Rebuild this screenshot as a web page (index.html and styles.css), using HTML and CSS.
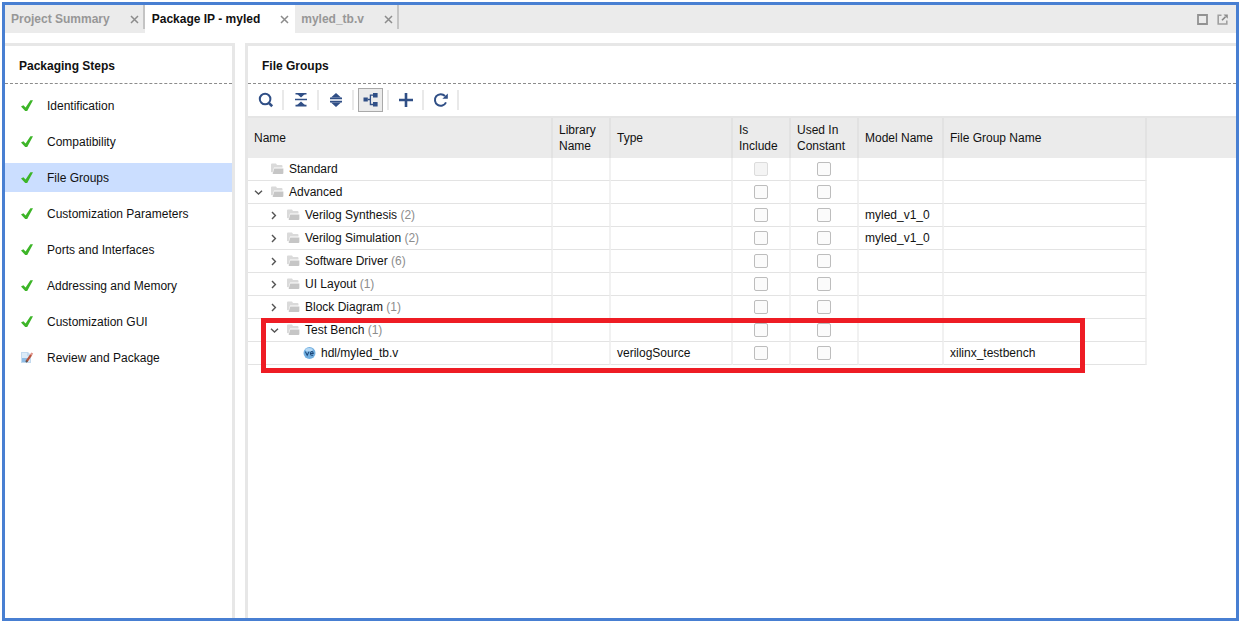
FILE: index.html
```html
<!DOCTYPE html>
<html lang="en">
<head>
<meta charset="utf-8">
<title>Package IP - myled</title>
<link rel="stylesheet" href="styles.css">
</head>
<body>
<svg class="defs" aria-hidden="true">
  <symbol id="close" viewBox="0 0 9 9"><path d="M1 1l7 7M8 1L1 8" stroke="#8c8c8c" stroke-width="1.5" fill="none"/></symbol>
  <symbol id="check" viewBox="0 0 14 14"><path d="M1 7.6L3.4 6.2L5.6 8.4L10.4 1.2H13L7.2 12H5.2z" fill="#3db528"/></symbol>
  <symbol id="folder" viewBox="0 0 13 12"><path d="M0 9V1.5Q0 0.5 1 0.5H5L6 2H10.5Q11.5 2 11.5 3V4.5H3L1.6 9.5z" fill="#dadada"/><path d="M3.2 5.6H12.4V10Q12.4 11 11.4 11H1.6z" fill="#c6c6c6"/></symbol>
  <symbol id="down" viewBox="0 0 9 9"><path d="M1 2.8L4.5 6L8 2.8" stroke="#555" stroke-width="1.4" fill="none"/></symbol>
  <symbol id="right" viewBox="0 0 9 9"><path d="M2 1L5.4 4.5L2 8" stroke="#555" stroke-width="1.4" fill="none"/></symbol>
</svg>
<div class="window">
  <header class="tabbar">
    <div class="tab"><span class="tab-label">Project Summary</span><button class="close" aria-label="Close Project Summary"><svg><use href="#close"/></svg></button></div>
    <div class="tab active"><span class="tab-label">Package IP - myled</span><button class="close" aria-label="Close Package IP"><svg><use href="#close"/></svg></button></div>
    <div class="tab"><span class="tab-label">myled_tb.v</span><button class="close" aria-label="Close myled_tb.v"><svg><use href="#close"/></svg></button></div>
    <div class="window-actions">
      <button aria-label="Maximize"><svg viewBox="0 0 11 11"><path d="M1 1H10V10H1z" fill="none" stroke="#929292" stroke-width="1.8"/></svg></button>
      <button aria-label="Float"><svg viewBox="0 0 11 11"><path d="M4.5 1.2H1.2V10H9.8V6.5" fill="none" stroke="#a0a0a0" stroke-width="1.6"/><path d="M5 6.2L8.5 2.7" stroke="#858585" stroke-width="1.6"/><path d="M6.5 0.5H10.8V4.8z" fill="#8c8c8c"/></svg></button>
    </div>
  </header>
  <main class="content">
    <nav class="steps">
      <h2 class="panel-title">Packaging Steps</h2>
      <ul class="step-list">
        <li><a href="#" class="step"><svg><use href="#check"/></svg>Identification</a></li>
        <li><a href="#" class="step"><svg><use href="#check"/></svg>Compatibility</a></li>
        <li><a href="#" class="step selected" aria-current="step"><svg><use href="#check"/></svg>File Groups</a></li>
        <li><a href="#" class="step"><svg><use href="#check"/></svg>Customization Parameters</a></li>
        <li><a href="#" class="step"><svg><use href="#check"/></svg>Ports and Interfaces</a></li>
        <li><a href="#" class="step"><svg><use href="#check"/></svg>Addressing and Memory</a></li>
        <li><a href="#" class="step"><svg><use href="#check"/></svg>Customization GUI</a></li>
        <li><a href="#" class="step"><svg viewBox="0 0 14 14"><path d="M1 1H8L11 4V12H1z" fill="#c3daef"/><path d="M2 2H7V5H10V11H2z" fill="#dcebf8"/><path d="M2 7H7.5V11H2z" fill="#8fbde6"/><path d="M6.5 10.5L11.3 3.6" stroke="#b5533c" stroke-width="2.2"/><path d="M10.8 4.2L12.3 2" stroke="#e0938a" stroke-width="2.2"/><path d="M6 11.3L7 9.8" stroke="#555" stroke-width="1.6"/></svg>Review and Package</a></li>
      </ul>
    </nav>
    <section class="groups">
      <h2 class="panel-title">File Groups</h2>
      <div class="toolbar">
        <button class="tool" aria-label="Search"><svg viewBox="0 0 16 16"><circle cx="7.1" cy="7" r="5.3" fill="none" stroke="#304f86" stroke-width="2"/><path d="M10.5 10.6L14.2 14.2" stroke="#304f86" stroke-width="2.6"/></svg></button><i class="sep"></i>
        <button class="tool" aria-label="Collapse all"><svg viewBox="0 0 16 16"><path d="M3 1H13L8 5.6zM8 9.4L13 14H3z" fill="#304f86"/><path d="M2 7.5H14M2.5 1.7H13.5M2.5 13.6H13.5" stroke="#304f86" stroke-width="1.6"/></svg></button><i class="sep"></i>
        <button class="tool" aria-label="Expand all"><svg viewBox="0 0 16 16"><path d="M8 1L13 5.4H3zM3 10.6H13L8 15z" fill="#304f86"/><path d="M2 6.4H14M2 9.6H14" stroke="#304f86" stroke-width="1.8"/></svg></button><i class="sep"></i>
        <button class="tool pressed" aria-label="Group by type" aria-pressed="true"><svg viewBox="0 0 16 16"><path d="M0.5 5.5H4.8V9.5H0.5zM10 1H14.6V5.4H10zM10 10H14.6V14.4H10z" fill="#304f86"/><path d="M4.8 7.5H7.4M10 3.2H7.4V12.5H10" fill="none" stroke="#304f86" stroke-width="1.3"/></svg></button><i class="sep"></i>
        <button class="tool" aria-label="Add"><svg viewBox="0 0 16 16"><path d="M8 1V15M1 8H15" stroke="#304f86" stroke-width="2.6"/></svg></button><i class="sep"></i>
        <button class="tool" aria-label="Refresh"><svg viewBox="0 0 16 16"><path d="M13 10.4A5.8 5.8 0 1 1 12 4" fill="none" stroke="#304f86" stroke-width="2"/><path d="M14.8 1.4V6.8H9.4z" fill="#304f86"/></svg></button><i class="sep"></i>
      </div>
      <div class="table-wrap">
        <table class="grid">
          <colgroup><col class="c-name"><col class="c-narrow"><col class="c-type"><col class="c-narrow"><col class="c-used"><col class="c-model"><col class="c-group"><col></colgroup>
          <thead><tr><th>Name</th><th>Library Name</th><th>Type</th><th>Is Include</th><th>Used In Constant</th><th>Model Name</th><th>File Group Name</th><th class="rest"></th></tr></thead>
          <tbody>
            <tr><td><div class="node"><span class="twist"></span><svg class="folder"><use href="#folder"/></svg>Standard</div></td><td></td><td></td><td class="tick"><input type="checkbox" disabled aria-label="Standard: is include"></td><td class="tick"><input type="checkbox" aria-label="Standard: used in constant"></td><td></td><td></td><td class="rest"></td></tr>
            <tr><td><div class="node"><svg class="twist"><use href="#down"/></svg><svg class="folder"><use href="#folder"/></svg>Advanced</div></td><td></td><td></td><td class="tick"><input type="checkbox" aria-label="Advanced: is include"></td><td class="tick"><input type="checkbox" aria-label="Advanced: used in constant"></td><td></td><td></td><td class="rest"></td></tr>
            <tr><td><div class="node level-1"><svg class="twist"><use href="#right"/></svg><svg class="folder"><use href="#folder"/></svg>Verilog Synthesis <span class="count">(2)</span></div></td><td></td><td></td><td class="tick"><input type="checkbox" aria-label="Verilog Synthesis: is include"></td><td class="tick"><input type="checkbox" aria-label="Verilog Synthesis: used in constant"></td><td>myled_v1_0</td><td></td><td class="rest"></td></tr>
            <tr><td><div class="node level-1"><svg class="twist"><use href="#right"/></svg><svg class="folder"><use href="#folder"/></svg>Verilog Simulation <span class="count">(2)</span></div></td><td></td><td></td><td class="tick"><input type="checkbox" aria-label="Verilog Simulation: is include"></td><td class="tick"><input type="checkbox" aria-label="Verilog Simulation: used in constant"></td><td>myled_v1_0</td><td></td><td class="rest"></td></tr>
            <tr><td><div class="node level-1"><svg class="twist"><use href="#right"/></svg><svg class="folder"><use href="#folder"/></svg>Software Driver <span class="count">(6)</span></div></td><td></td><td></td><td class="tick"><input type="checkbox" aria-label="Software Driver: is include"></td><td class="tick"><input type="checkbox" aria-label="Software Driver: used in constant"></td><td></td><td></td><td class="rest"></td></tr>
            <tr><td><div class="node level-1"><svg class="twist"><use href="#right"/></svg><svg class="folder"><use href="#folder"/></svg>UI Layout <span class="count">(1)</span></div></td><td></td><td></td><td class="tick"><input type="checkbox" aria-label="UI Layout: is include"></td><td class="tick"><input type="checkbox" aria-label="UI Layout: used in constant"></td><td></td><td></td><td class="rest"></td></tr>
            <tr><td><div class="node level-1"><svg class="twist"><use href="#right"/></svg><svg class="folder"><use href="#folder"/></svg>Block Diagram <span class="count">(1)</span></div></td><td></td><td></td><td class="tick"><input type="checkbox" aria-label="Block Diagram: is include"></td><td class="tick"><input type="checkbox" aria-label="Block Diagram: used in constant"></td><td></td><td></td><td class="rest"></td></tr>
            <tr><td><div class="node level-1"><svg class="twist"><use href="#down"/></svg><svg class="folder"><use href="#folder"/></svg>Test Bench <span class="count">(1)</span></div></td><td></td><td></td><td class="tick"><input type="checkbox" aria-label="Test Bench: is include"></td><td class="tick"><input type="checkbox" aria-label="Test Bench: used in constant"></td><td></td><td></td><td class="rest"></td></tr>
            <tr><td><div class="node level-2"><span class="twist"></span><svg class="folder" viewBox="0 0 13 13"><circle cx="6.5" cy="6.5" r="6.5" fill="#72afe0"/><ellipse cx="6" cy="3" rx="4" ry="2" fill="#b5d9f5"/><path d="M2 5L4 9L6 5M7.6 7H10.6Q10.4 4.8 9 4.8Q7.5 4.8 7.5 7Q7.5 9 9 9H10.5" fill="none" stroke="#1d4778" stroke-width="1.1"/></svg>hdl/myled_tb.v</div></td><td></td><td>verilogSource</td><td class="tick"><input type="checkbox" aria-label="myled_tb.v: is include"></td><td class="tick"><input type="checkbox" aria-label="myled_tb.v: used in constant"></td><td></td><td>xilinx_testbench</td><td class="rest"></td></tr>
          </tbody>
        </table>
        <div class="highlight"></div>
      </div>
    </section>
  </main>
</div>
</body>
</html>
```
FILE: styles.css
```css
* { box-sizing: border-box; }

body {
  margin: 0;
  padding: 2px 4px 3px 2px;
  height: 100vh;
  background: #fff;
  color: #111;
  font: 12px/16px "Liberation Sans", Arial, sans-serif;
}

button {
  padding: 0;
  border: 0;
  background: none;
  font: inherit;
}

svg { display: block; flex: none; }
.defs { position: absolute; width: 0; height: 0; }

.window {
  display: flex;
  flex-direction: column;
  height: 100%;
  border: 3px solid #487fd2;
}

/* Tabs */
.tabbar {
  display: flex;
  height: 28px;
  background: #ebebeb;
}
.tab {
  display: flex;
  align-items: center;
  gap: 20px;
  height: 24px;
  padding: 4px 4px 0 6px;
  border-right: 2px solid #c4c4c4;
  color: #979797;
  font-weight: bold;
}
.tab.active {
  height: 28px;
  padding: 0 6px 0 7px;
  border-right: 0;
  background: #fff;
  color: #111;
}
.close, .close svg { width: 9px; height: 9px; }
.window-actions {
  display: flex;
  align-items: center;
  gap: 9px;
  margin-left: auto;
  padding-right: 8px;
}
.window-actions svg { width: 11px; height: 11px; }

/* Panels */
.content {
  display: flex;
  flex: 1;
  gap: 10px;
  min-height: 0;
  padding-top: 10px;
}
.steps {
  flex: none;
  width: 230px;
  border: solid #e7e7e7;
  border-width: 3px 3px 0 0;
}
.groups {
  flex: 1;
  min-width: 0;
  border: solid #e7e7e7;
  border-width: 3px 0 0 3px;
}
.panel-title {
  margin: 0;
  height: 38px;
  padding-left: 14px;
  border-bottom: 1px dashed #8c8c8c;
  font-size: 12px;
  line-height: 40px;
}

.step-list {
  display: flex;
  flex-direction: column;
  gap: 7px;
  margin: 0;
  padding: 7px 0;
  list-style: none;
}
.step {
  display: flex;
  align-items: center;
  gap: 13px;
  height: 29px;
  padding-left: 15px;
  color: inherit;
  text-decoration: none;
}
.step svg { width: 14px; height: 14px; }
.step.selected { background: #cbdeff; }

/* Toolbar */
.toolbar {
  display: flex;
  align-items: center;
  height: 34px;
  padding-left: 1px;
  border-bottom: 2px solid #e5e5e5;
}
.tool {
  display: grid;
  place-items: center;
  width: 25px;
  height: 24px;
  margin: 0 4px;
}
.tool svg { width: 16px; height: 16px; }
.tool.pressed { border: 1px solid #a9a9a9; background: #ebebeb; }
.sep { width: 2px; height: 20px; background: #e9e9e9; }

/* File group tree table */
.table-wrap { position: relative; }
.grid {
  width: 100%;
  border-collapse: separate;
  border-spacing: 0;
  table-layout: fixed;
}
.c-name { width: 305px; }
.c-narrow { width: 58px; }
.c-type { width: 122px; }
.c-used { width: 68px; }
.c-model { width: 85px; }
.c-group { width: 203px; }
.grid th {
  height: 40px;
  padding: 0 0 0 6px;
  border-right: 2px solid #e2e2e2;
  background: #ebebeb;
  font-weight: normal;
  text-align: left;
}
.grid td {
  height: 23px;
  padding: 0 0 0 6px;
  border-right: 2px solid #f1f1f1;
  border-bottom: 1px solid #e3e3e3;
}
.grid th.rest { border-right: 0; }
.grid td.rest { border: 0; }
.grid td.tick { padding: 0; }
.tick input {
  display: block;
  appearance: none;
  width: 14px;
  height: 14px;
  margin: 0 auto;
  border: 1px solid #bdbdbd;
  border-radius: 2px;
  background: #fbfbfb;
}
.tick input:disabled { border-color: #dcdcdc; background: #f4f4f4; }
.node { display: flex; align-items: center; white-space: pre; }
.level-1 { padding-left: 16px; }
.level-2 { padding-left: 32px; }
.twist { width: 9px; height: 9px; margin-right: 8px; }
.folder { width: 13px; height: 12px; margin-right: 5px; }
.count { color: #8d8d8d; }

.highlight {
  position: absolute;
  top: 200px;
  left: 13px;
  width: 824px;
  height: 55px;
  border: 5px solid #ee1c24;
}
```
